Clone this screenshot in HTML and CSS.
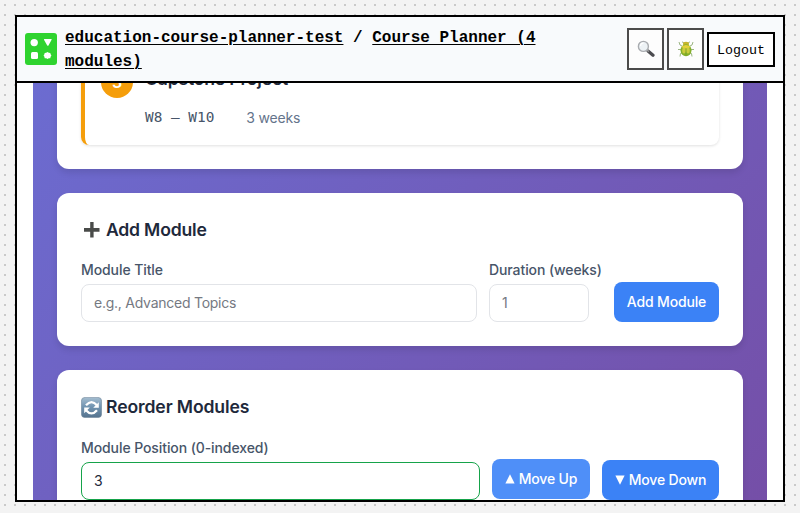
FILE: index.html
```html
<!DOCTYPE html>
<html lang="en">
<head>
<meta charset="utf-8">
<title>Course Planner</title>
<link rel="stylesheet" href="styles.css">
</head>
<body>
<div class="frame">
  <header class="topbar">
    <svg class="logo" viewBox="0 0 32 32"><rect width="32" height="32" rx="3" fill="#2fd32f"/><g fill="#fff"><circle cx="9.2" cy="9.6" r="3.7"/><path d="M19 6.7q-.3-.7.6-.7h6.5q.9 0 .5.8l-3 5.5q-.8 1-1.5 0z"/><rect x="6" y="19" width="7" height="7" rx="1.5"/><path d="M22.5 19l1.3.7 1.5.2.3 1.4.8 1.2-.8 1.3-.3 1.4-1.5.1-1.3.7-1.3-.7-1.5-.1-.3-1.4-.8-1.3.8-1.2.3-1.4 1.5-.2z"/></g></svg>
    <div class="crumbs"><a>education-course-planner-test</a> / <a>Course Planner (4 modules)</a></div>
    <nav class="actions">
      <button class="tool" aria-label="Search"><svg width="18" height="18" viewBox="0 0 18 18"><path d="M11 11l5 4.3" stroke="#4c4c50" stroke-width="3.2" stroke-linecap="round"/><path d="M9.8 9.8l2 1.8" stroke="#999" stroke-width="1.5"/><circle cx="6.4" cy="6.4" r="5" fill="#edf2f5" stroke="#a9acb0" stroke-width="1.4"/><path d="M3.5 6a3 3 0 0 1 3-2.8" stroke="#fff" stroke-width="1.2" fill="none"/></svg></button>
      <button class="tool" aria-label="Bug"><svg width="18" height="18" viewBox="0 0 18 18"><g fill="none" stroke="#9bb583" stroke-width="1"><path d="M7 3L5 1.8M11 3l2-1.2M5 6L3 5 2 2M13 6l2-1 1-3M4 9.5H1M14 9.5h3M5 13l-1.5.5L3 16.5M13 13l1.5.5.5 3"/></g><ellipse cx="9" cy="4" rx="3" ry="2.3" fill="#c5b52b"/><ellipse cx="9" cy="10.3" rx="5.5" ry="6" fill="#84b02a"/><path d="M4.7 6.6Q9 3.3 13.3 6.6L12 8.3Q9 9.4 6 8.3z" fill="#e6d03a"/><ellipse cx="7" cy="10.6" rx="1.8" ry="3" fill="#cccc3c"/><ellipse cx="11" cy="10.6" rx="1.8" ry="3" fill="#cccc3c"/><path d="M9 8v8" stroke="#7aa025" stroke-width=".6"/></svg></button>
      <button class="logout">Logout</button>
    </nav>
  </header>
  <main class="viewport">
    <div class="planner">
      <section class="card card-list">
        <article class="module">
          <span class="badge">3</span>
          <div class="module-body">
            <h3>Capstone Project</h3>
            <div class="meta"><span class="weeks">W8 – W10</span><span>3 weeks</span></div>
          </div>
        </article>
      </section>
      <section class="card">
        <h2><svg width="21" height="21" viewBox="0 0 21 21"><path d="M9.2 2h3.4v6h5.9v3.8h-5.9v5.7H9.2v-5.7H3V8h6.2z" fill="#494b49"/></svg>Add Module</h2>
        <div class="row">
          <label class="field grow">Module Title<input placeholder="e.g., Advanced Topics"></label>
          <label class="field duration">Duration (weeks)<input placeholder="1"></label>
          <button class="primary add">Add Module</button>
        </div>
      </section>
      <section class="card">
        <h2 class="tall"><svg width="21" height="21" viewBox="0 0 21 21"><defs><linearGradient id="tile" x2="0" y2="1"><stop stop-color="#a5bdd0"/><stop offset=".45" stop-color="#7295b2"/><stop offset="1" stop-color="#55738e"/></linearGradient></defs><rect x=".4" y=".4" width="20.2" height="20.2" rx="3.6" fill="url(#tile)" stroke="#6d8498" stroke-width=".6"/><g fill="none" stroke="#fff" stroke-width="2.3"><path d="M5 8.2q5.5-6.3 11 0M16 13.2q-5.5 6.3-11 0"/></g><path d="M17.8 5.2v5.6h-5.6zM3.2 16.2v-5.6h5.6z" fill="#fff"/></svg><span>Reorder Modules</span></h2>
        <div class="row">
          <label class="field grow active">Module Position (0-indexed)<input value="3"></label>
          <button class="primary raised"><svg width="10" height="10" viewBox="0 0 10 10"><path d="M5 .2l4.6 9.2H.4z" fill="#fff"/></svg>Move Up</button>
          <button class="primary lower"><svg width="10" height="10" viewBox="0 0 10 10"><path d="M5 9.8L.4.6h9.2z" fill="#fff"/></svg>Move Down</button>
        </div>
      </section>
    </div>
  </main>
</div>
</body>
</html>
```
FILE: styles.css
```css
* { box-sizing: border-box; }
body {
  margin: 0;
  padding: 15px 15px 11px;
  height: 513px;
  overflow: hidden;
  background: conic-gradient(from 90deg at 8px 8px, #c9c9c9 25%, #f3f3f3 0) -4px -4px / 10px 10px;
  font-family: Inter, "Liberation Sans", sans-serif;
}
.frame {
  height: 487px;
  border: 2px solid #000;
  background: #fff;
  display: flex;
  flex-direction: column;
  overflow: hidden;
}
.topbar {
  flex: 0 0 66px;
  display: flex;
  align-items: center;
  padding: 0 8px;
  background: #f8fafc;
  border-bottom: 2px solid #000;
  font-family: "Liberation Mono", monospace;
}
.logo { width: 32px; height: 32px; flex: none; margin-right: 8px; }
.crumbs { width: 520px; padding-top: 2px; font-size: 16px; font-weight: 700; line-height: 24px; }
.crumbs a { text-decoration: underline; text-underline-offset: 2px; text-decoration-thickness: 1px; }
.actions { margin-left: auto; display: flex; align-items: center; gap: 3px; }
button { margin: 0; font: inherit; }
.tool {
  width: 37px;
  height: 42px;
  padding: 0;
  display: grid;
  place-items: center;
  background: #fdfdfd;
  border: 2px solid #4b4b4b;
}
.logout { width: 68px; height: 35px; padding: 2px 0 0; background: #fff; border: 2px solid #000; color: #000; font-size: 13.333px; }
.viewport { flex: 1; min-height: 0; overflow: hidden; padding: 0 16px; }
.planner {
  height: 900px;
  padding: 0 24px;
  display: flex;
  flex-direction: column;
  gap: 24px;
  background: linear-gradient(135deg, #667eea, #764ba2) 0 -720px / 734px 1280px;
}
.card { padding: 24px; background: #fff; border-radius: 12px; box-shadow: 0 4px 6px rgba(0,0,0,.1); }
.card-list { margin-top: -60px; height: 146px; display: flex; flex-direction: column; justify-content: flex-end; }
.module {
  height: 112px;
  flex: none;
  display: flex;
  align-items: flex-end;
  gap: 12px;
  padding: 0 16px 15px;
  border-left: 4px solid #f59e0b;
  border-radius: 8px;
  box-shadow: 0 1px 3px rgba(0,0,0,.12);
}
.badge {
  width: 32px;
  height: 32px;
  margin-bottom: 32px;
  display: grid;
  place-items: center;
  border-radius: 50%;
  background: #f59e0b;
  color: #fff;
  font-weight: 600;
  font-size: 16px;
}
h3 { margin: 0 0 14px; font-size: 17.6px; font-weight: 600; line-height: 26px; letter-spacing: -.2px; color: #1e293b; }
.meta { display: flex; align-items: center; gap: 32px; height: 24px; padding-bottom: 2px; color: #64748b; font-size: 14px; letter-spacing: -.2px; }
.weeks { font-family: "DejaVu Sans Mono", monospace; font-size: 14.4px; letter-spacing: 0; color: #475569; }
h2 { margin: 0 0 16px; display: flex; align-items: center; gap: 4px; font-size: 17.6px; font-weight: 600; line-height: 26px; letter-spacing: -.2px; color: #1e293b; }
.tall { height: 27px; padding-bottom: 1px; letter-spacing: -.12px; }
.row { display: flex; align-items: flex-end; gap: 12px; }
.field { display: flex; flex-direction: column; gap: 3px; color: #475569; font-size: 14px; font-weight: 450; line-height: 22px; letter-spacing: -.09px; }
.grow { flex: 1; }
.duration { width: 113px; white-space: nowrap; }
.duration input { width: 100px; }
input {
  width: 100%;
  height: 38px;
  padding: 0 12px 2px;
  border: 1px solid #e2e4e8;
  border-radius: 8px;
  background: #fff;
  color: #1e293b;
  font: 400 14px Inter, sans-serif;
  letter-spacing: -.25px;
}
input::placeholder { color: #757982; }
.active input { border-color: #16a34a; }
.primary {
  height: 40px;
  padding: 0 0 1px;
  display: flex;
  flex: none;
  align-items: center;
  justify-content: center;
  gap: 4px;
  border: 0;
  border-radius: 8px;
  background: #3b82f6;
  color: #fff;
  font-size: 14px;
  font-weight: 450;
  letter-spacing: -.15px;
  white-space: nowrap;
}
.primary svg { flex: none; }
.add { width: 105px; }
.raised { width: 98px; background: #4f8ff8; transform: translateY(-1px); }
.lower { width: 117px; }
```
